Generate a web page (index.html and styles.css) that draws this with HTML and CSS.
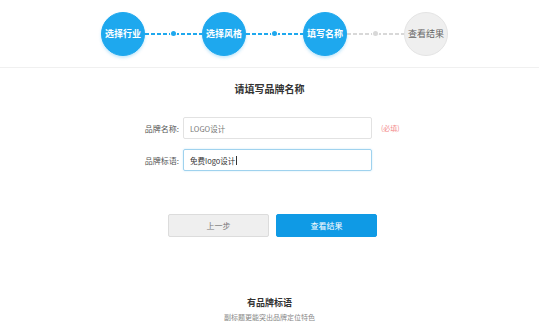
FILE: index.html
```html
<!DOCTYPE html>
<html lang="zh-CN">
<head>
    <meta charset="UTF-8">
    <title>品牌名称</title>
    <link rel="stylesheet" href="styles.css">
</head>
<body>
    <div class="cabecera">
        <div class="pasos">
            <div class="paso hecho">选择行业</div>
            <div class="enlace"><span class="punto"></span></div>
            <div class="paso hecho">选择风格</div>
            <div class="enlace"><span class="punto"></span></div>
            <div class="paso hecho">填写名称</div>
            <div class="enlace gris"><span class="punto"></span></div>
            <div class="paso">查看结果</div>
        </div>
    </div>

    <h2 class="titulo">请填写品牌名称</h2>

    <div class="formulario">
        <label class="etiqueta">品牌名称:</label>
        <div class="campo">LOGO设计</div>
        <span class="nota">(必填)</span>

        <label class="etiqueta">品牌标语:</label>
        <div class="campo activo">免费logo设计<span class="cursor"></span></div>
        <span></span>
    </div>

    <div class="botones">
        <button class="boton anterior">上一步</button>
        <button class="boton siguiente">查看结果</button>
    </div>

    <div class="pie">
        <h3>有品牌标语</h3>
        <p>副标题更能突出品牌定位特色</p>
    </div>
</body>
</html>
```

FILE: styles.css
```css
body {
    margin: 0;
    font-family: "Noto Sans CJK SC", "Liberation Sans", sans-serif;
    background: #fff;
    color: #333;
}

/* cabecera con los pasos */
.cabecera {
    height: 67px;
    border-bottom: 1px solid #f0f0f0;
    display: flex;
    align-items: center;
}

.pasos {
    display: flex;
    align-items: center;
    justify-content: center;
    width: 100%;
    padding-left: 10px;
    box-sizing: border-box;
}

.paso {
    width: 44px;
    height: 44px;
    border-radius: 50%;
    background: #efefef;
    border: 1px solid #e4e4e4;
    box-sizing: border-box;
    color: #666;
    font-size: 9px;
    display: flex;
    align-items: center;
    justify-content: center;
    flex-shrink: 0;
}

.paso.hecho {
    background: #1ea8ee;
    border-color: #1ea8ee;
    color: #fff;
    font-weight: bold;
    box-shadow: 0 2px 3px rgba(30, 168, 238, 0.25);
}

.enlace {
    width: 57px;
    height: 2px;
    background: repeating-linear-gradient(90deg, #1ea8ee 0 4px, transparent 4px 6px);
    display: flex;
    justify-content: center;
    align-items: center;
}

.enlace .punto {
    width: 5px;
    height: 5px;
    border-radius: 50%;
    background: #1ea8ee;
    box-shadow: 0 0 0 1px #fff;
}

.enlace.gris {
    background: repeating-linear-gradient(90deg, #d8d8d8 0 4px, transparent 4px 6px);
}

.enlace.gris .punto {
    background: #d8d8d8;
}

.titulo {
    margin: 14px 0 0;
    text-align: center;
    font-size: 10px;
    line-height: 14px;
    color: #333;
}

/* formulario */
.formulario {
    margin-top: 21px;
    display: grid;
    grid-template-columns: 44px 189px 28px;
    row-gap: 10px;
    justify-content: center;
    align-items: center;
}

.etiqueta {
    font-size: 8px;
    color: #555;
    text-align: right;
    padding-right: 4px;
}

.campo {
    height: 22px;
    border: 1px solid #e2e2e2;
    border-radius: 2px;
    box-sizing: border-box;
    padding: 0 6px;
    font-size: 7.5px;
    color: #777;
    display: flex;
    align-items: center;
}

.campo.activo {
    border-color: #9fd2ee;
    color: #333;
    box-shadow: 0 0 2px rgba(30, 168, 238, 0.25);
}

.cursor {
    display: inline-block;
    width: 1px;
    height: 9px;
    background: #333;
    margin-left: 1px;
}

.nota {
    font-size: 7px;
    color: #f38a8a;
    padding-left: 9px;
}

/* botones */
.botones {
    margin-top: 43px;
    display: flex;
    justify-content: center;
    gap: 7px;
    padding-left: 6px;
}

.boton {
    width: 101px;
    height: 23px;
    border-radius: 2px;
    font-family: inherit;
    font-size: 8px;
    cursor: pointer;
}

.boton.anterior {
    background: #efefef;
    border: 1px solid #dcdcdc;
    color: #777;
}

.boton.siguiente {
    background: #0f9ae5;
    border: 1px solid #0f9ae5;
    color: #fff;
}

/* pie */
.pie {
    margin-top: 60px;
    text-align: center;
}

.pie h3 {
    margin: 0;
    font-size: 9px;
    line-height: 12px;
    color: #333;
}

.pie p {
    margin: 3px 0 0;
    font-size: 7px;
    line-height: 10px;
    color: #888;
}
```
